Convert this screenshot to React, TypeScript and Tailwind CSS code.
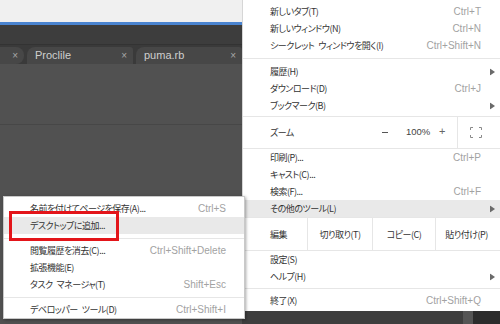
import React from "react";

const jp = "font-['Meiryo_UI','Noto_Sans_CJK_JP',sans-serif] [font-feature-settings:'palt'] text-[9px] tracking-[-0.5px] text-[#333] leading-none whitespace-pre";
const sc = "font-['Liberation_Sans',sans-serif] text-[10px] text-[#a2a2a2] leading-none";

function Arrow() {
  return (
    <svg width="5" height="7" viewBox="0 0 5 7" className="absolute right-[5px] top-1/2 -translate-y-1/2">
      <path d="M0 0 L5 3.5 L0 7 Z" fill="#6a6a6a" />
    </svg>
  );
}

function Item({ label, s, arrow, hi }: { label: string; s?: string; arrow?: boolean; hi?: boolean }) {
  return (
    <div className={`relative flex h-[17px] items-center justify-between pl-[27px] pr-[19px] ${hi ? "bg-[#e9e9e9]" : ""}`}>
      <span className={jp}>{label}</span>
      {s && <span className={sc}>{s}</span>}
      {arrow && <Arrow />}
    </div>
  );
}

function Sep() {
  return <div className="h-px bg-[#e6e6e6]" />;
}

function SubItem({ label, s, hi }: { label: string; s?: string; hi?: boolean }) {
  return (
    <div className={`flex h-[17px] items-center justify-between pl-[26px] pr-[18px] ${hi ? "bg-[#e9e9e9]" : ""}`}>
      <span className={jp}>{label}</span>
      {s && <span className={sc}>{s}</span>}
    </div>
  );
}

function Tab({ label, w, first }: { label?: string; w: number; first?: boolean }) {
  return (
    <div
      className={`relative flex h-[17px] items-center shrink-0 bg-[#474747] ${first ? "rounded-r-[8px]" : "rounded-tl-[8px] rounded-tr-[3px]"}`}
      style={{ width: w }}
    >
      {label && <span className="pl-[8px] font-['Liberation_Sans',sans-serif] text-[11px] text-[#cfcfcf]">{label}</span>}
      <span className="absolute right-[6px] top-[1px] font-['Liberation_Sans',sans-serif] text-[10px] text-[#a8a8a8]">×</span>
    </div>
  );
}

export default function App() {
  return (
    <div className="relative h-[324px] w-[500px] overflow-hidden bg-[#3e3e3e]">
      <div className="flex h-full">
        <div className="flex w-[242px] flex-col">
          <div className="h-[22px] bg-[#f0f0f0]" />
          <div className="h-[3px] bg-[#4a84d0]" />
          <div className="h-[20px] bg-[#3d3d3d] border-b border-[#333]" />
          <div className="flex h-[19px] items-end gap-[3px] bg-[#3a3a3a] -ml-[2px]">
            <Tab w={26} first />
            <Tab label="Proclile" w={106} />
            <Tab label="puma.rb" w={106} />
          </div>
          <div className="flex flex-1 flex-col bg-[#515151]">
            <div className="h-[60px]" />
            <div className="h-px bg-[#474747]" />
          </div>
        </div>
        <div className="flex flex-1 items-end">
          <div className="flex h-[13px] w-full">
            <div className="w-[221px] bg-[#3e3e3e]" />
            <div className="w-[10px] bg-[#555]" />
            <div className="flex-1 bg-[#2c2c2c]" />
          </div>
        </div>
      </div>

      {/* main menu */}
      <div className="absolute left-[242px] top-0 w-[258px] h-[311px] bg-white border-l border-[#d6d6d6] pt-[3px]">
        <Item label="新しいタブ(T)" s="Ctrl+T" />
        <Item label="新しいウィンドウ(N)" s="Ctrl+N" />
        <Item label={"シークレット\u2002ウィンドウを開く(I)"} s="Ctrl+Shift+N" />
        <div className="h-[9px] flex items-center"><div className="h-px w-full bg-[#e6e6e6]" /></div>
        <Item label="履歴(H)" arrow />
        <Item label="ダウンロード(D)" s="Ctrl+J" />
        <Item label="ブックマーク(B)" arrow />
        <div className="h-[2px]" />
        <Sep />
        <div className="relative flex h-[31px] items-center pl-[27px]">
          <span className={jp}>ズーム</span>
          <span className="absolute left-[139px] top-[15px] h-px w-[6px] bg-[#555]" />
          <span className="absolute left-[163px] top-[10px] font-['Liberation_Sans',sans-serif] text-[9.5px] text-[#444] leading-none">100%</span>
          <span className="absolute left-[196px] top-[9px] font-['Liberation_Sans',sans-serif] text-[11px] text-[#666] leading-none">+</span>
          <div className="absolute left-[214px] top-0 h-full w-px bg-[#e6e6e6]" />
          <svg className="absolute left-[227px] top-[10px]" width="12" height="11" viewBox="0 0 12 11">
            <path d="M0.5 3 V0.5 H3 M9 0.5 H11.5 V3 M11.5 8 V10.5 H9 M3 10.5 H0.5 V8" fill="none" stroke="#8a8a8a" strokeWidth="1" />
          </svg>
        </div>
        <Sep />
        <Item label="印刷(P)..." s="Ctrl+P" />
        <Item label="キャスト(C)..." />
        <Item label="検索(F)..." s="Ctrl+F" />
        <Item label="その他のツール(L)" arrow hi />
        <Sep />
        <div className="flex h-[33px] items-center border-b border-[#e6e6e6]">
          <div className="flex h-full w-[64px] items-center pl-[27px]">
            <span className={jp}>編集</span>
          </div>
          <div className="flex h-full w-[65px] items-center justify-center border-l border-[#e6e6e6]">
            <span className={jp}>切り取り(T)</span>
          </div>
          <div className="flex h-full w-[63px] items-center justify-center border-l border-[#e6e6e6]">
            <span className={jp}>コピー(C)</span>
          </div>
          <div className="flex h-full flex-1 items-center justify-center border-l border-[#e6e6e6] pr-[3px]">
            <span className={jp}>貼り付け(P)</span>
          </div>
        </div>
        <Item label="設定(S)" />
        <Item label="ヘルプ(H)" arrow />
        <div className="h-[7px] flex items-center"><div className="h-px w-full bg-[#e6e6e6]" /></div>
        <Item label="終了(X)" s="Ctrl+Shift+Q" />
      </div>

      {/* submenu */}
      <div className="absolute left-[3px] top-[196px] w-[242px] h-[123px] bg-white border border-[#c9c9c9] shadow-[1px_1px_3px_rgba(0,0,0,0.35)] pt-[3px]">
        <SubItem label="名前を付けてページを保存(A)..." s="Ctrl+S" />
        <SubItem label="デスクトップに追加..." hi />
        <div className="h-[8px] flex items-center"><div className="h-px w-full bg-[#e6e6e6]" /></div>
        <SubItem label="閲覧履歴を消去(C)..." s="Ctrl+Shift+Delete" />
        <SubItem label="拡張機能(E)" />
        <SubItem label={"タスク\u2002マネージャ(T)"} s="Shift+Esc" />
        <div className="h-[8px] flex items-center"><div className="h-px w-full bg-[#e6e6e6]" /></div>
        <SubItem label={"デベロッパー\u2002ツール(D)"} s="Ctrl+Shift+I" />
      </div>

      {/* red highlight box */}
      <div className="absolute left-[9px] top-[211px] w-[110px] h-[30px] border-[3px] border-[#e3151a]" />
    </div>
  );
}
